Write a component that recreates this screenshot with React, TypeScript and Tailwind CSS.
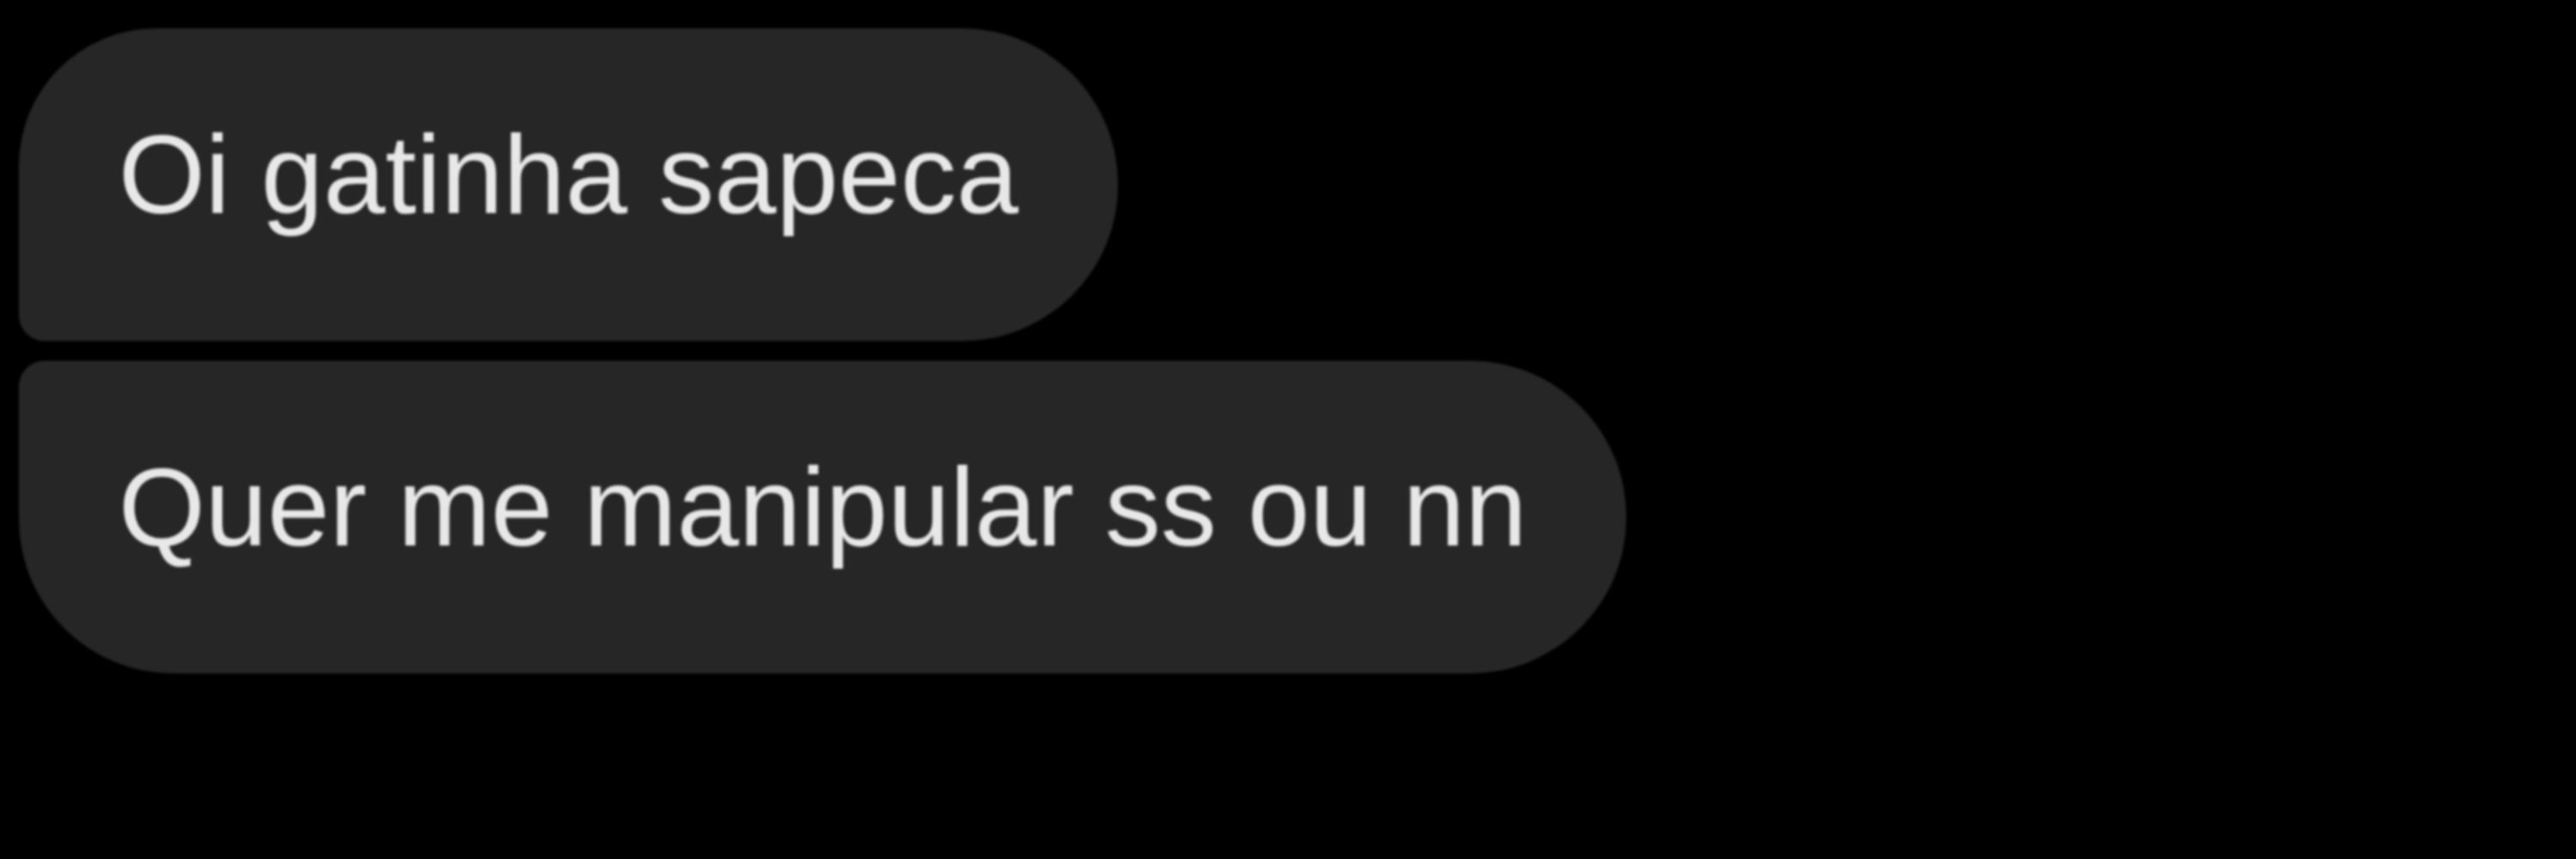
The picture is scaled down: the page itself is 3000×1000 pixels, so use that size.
const messages = [
  { id: 1, text: "Oi gatinha sapeca", corners: "rounded-tl-[160px] rounded-bl-[30px]" },
  { id: 2, text: "Quer me manipular ss ou nn", corners: "rounded-tl-[30px] rounded-bl-[180px]" },
];

function Bubble({ text, corners }: { text: string; corners: string }) {
  return (
    <div
      className={`h-[364px] w-fit rounded-r-[182px] bg-[#262626] pl-[116px] pr-[116px] pt-[105px] ${corners}`}
    >
      <p className="whitespace-nowrap text-[130px] leading-[130px] text-[#e8e8e8] [font-family:'Liberation_Sans',Arial,sans-serif]">
        {text}
      </p>
    </div>
  );
}

export default function App() {
  return (
    <div className="h-[1000px] w-[3000px] overflow-hidden bg-black pl-[22px] pt-[33px]">
      {/* the source is a soft upscaled photo, so blur a touch */}
      <div className="flex flex-col gap-[23px] blur-[1.5px]">
        {messages.map((m) => (
          <Bubble key={m.id} text={m.text} corners={m.corners} />
        ))}
      </div>
    </div>
  );
}
